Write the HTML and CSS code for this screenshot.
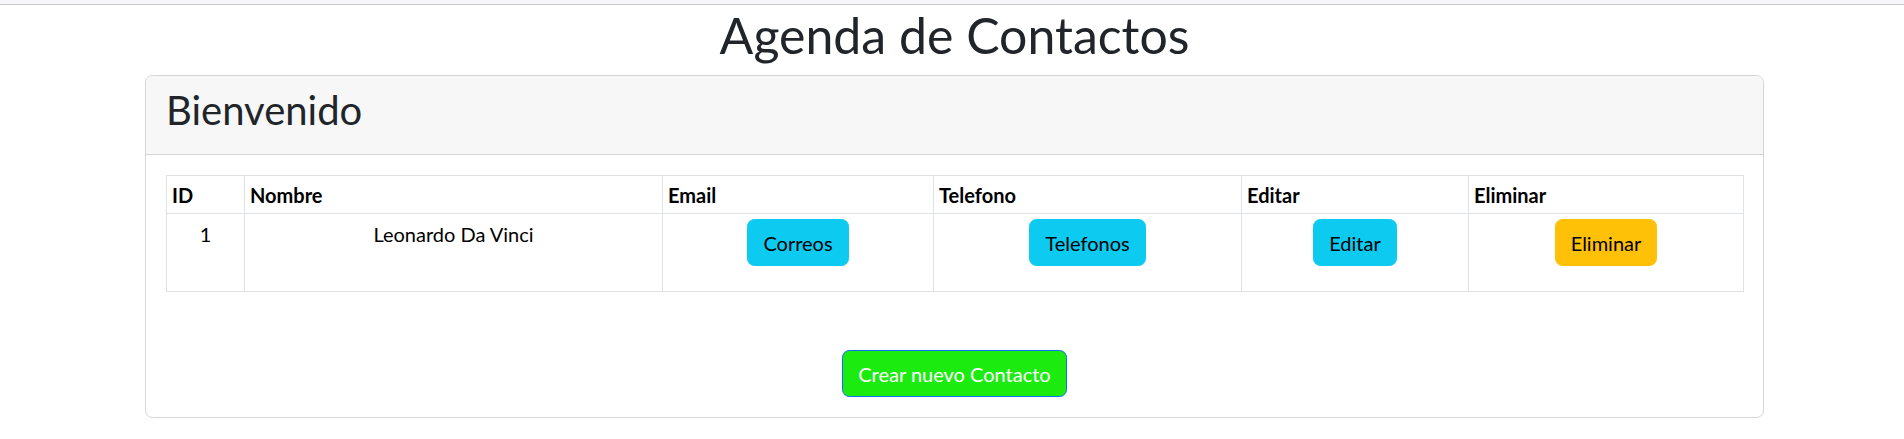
FILE: index.html
```html
<!DOCTYPE html>
<html lang="es">
<head>
<meta charset="utf-8">
<title>Agenda de Contactos</title>
<link rel="stylesheet" href="styles.css">
</head>
<body>
<div class="topbar"></div>
<main class="page">
  <h1 class="title">Agenda de Contactos</h1>
  <section class="card">
    <header class="card-header">
      <h2 class="card-title">Bienvenido</h2>
    </header>
    <div class="card-body">
      <table class="contacts">
        <thead>
          <tr>
            <th class="c-id">ID</th>
            <th class="c-name">Nombre</th>
            <th class="c-email">Email</th>
            <th class="c-tel">Telefono</th>
            <th class="c-edit">Editar</th>
            <th class="c-del">Eliminar</th>
          </tr>
        </thead>
        <tbody>
          <tr>
            <td class="cell">1</td>
            <td class="cell">Leonardo Da Vinci</td>
            <td class="cell"><form class="row-form"><button type="button" class="btn btn-info">Correos</button></form></td>
            <td class="cell"><form class="row-form"><button type="button" class="btn btn-info">Telefonos</button></form></td>
            <td class="cell"><form class="row-form"><button type="button" class="btn btn-info">Editar</button></form></td>
            <td class="cell"><form class="row-form"><button type="button" class="btn btn-warning">Eliminar</button></form></td>
          </tr>
        </tbody>
      </table>
      <div class="create">
        <button type="button" class="btn btn-create">Crear nuevo Contacto</button>
      </div>
    </div>
  </section>
</main>
</body>
</html>
```
FILE: styles.css
```css
* { box-sizing: border-box; }

html, body {
  margin: 0;
  background: #ffffff;
}

body {
  font-family: "Lato", "Noto Sans", sans-serif;
  font-size: 20px;
  line-height: 30px;
  color: #212529;
}

.topbar {
  height: 5px;
  background: #f6f6f8;
  border-bottom: 1px solid #c8c8c8;
}

.page {
  padding-left: 5px;
}

.title {
  margin: 0 0 10px;
  text-align: center;
  font-size: 50px;
  line-height: 60px;
  font-weight: 400;
  color: #212529;
}

.card {
  width: 1619px;
  margin: 0 auto;
  border: 1px solid #d5d5d5;
  border-radius: 7.5px;
  overflow: hidden;
}

.card-header {
  background: #f7f7f7;
  padding: 10px 20px;
  border-bottom: 1px solid #d5d5d5;
}

.card-title {
  margin: 0 0 10px;
  font-size: 40px;
  line-height: 48px;
  font-weight: 400;
  color: #212529;
}

.card-body {
  padding: 20px;
}

.contacts {
  width: 100%;
  border-collapse: collapse;
  table-layout: fixed;
  border: 1px solid #dee2e6;
  color: #000;
}

.contacts th,
.contacts td {
  border: 1px solid #dee2e6;
}

.contacts th {
  text-align: left;
  font-weight: 700;
  padding: 3.5px 5px;
  line-height: 30px;
}

.c-id { width: 78px; }
.c-name { width: 418px; }
.c-email { width: 271px; }
.c-tel { width: 308px; }
.c-edit { width: 227px; }
.c-del { width: 275px; }

.cell {
  padding: 5px;
  vertical-align: top;
  text-align: center;
}

.row-form {
  margin: 0 0 20px;
}

.btn {
  display: inline-block;
  font-family: inherit;
  font-size: 20px;
  line-height: 30px;
  padding: 7.5px 15px;
  border: 1.25px solid transparent;
  border-radius: 7.5px;
  color: #000;
  cursor: pointer;
  vertical-align: top;
}

.btn-info {
  background: #0dcaf0;
  border-color: #0dcaf0;
}

.btn-warning {
  background: #ffc107;
  border-color: #ffc107;
}

.create {
  padding-top: 58px;
  display: flex;
  justify-content: center;
}

.btn-create {
  background: #1ceb10;
  border-color: #0d6efd;
  color: #ffffff;
}
```
